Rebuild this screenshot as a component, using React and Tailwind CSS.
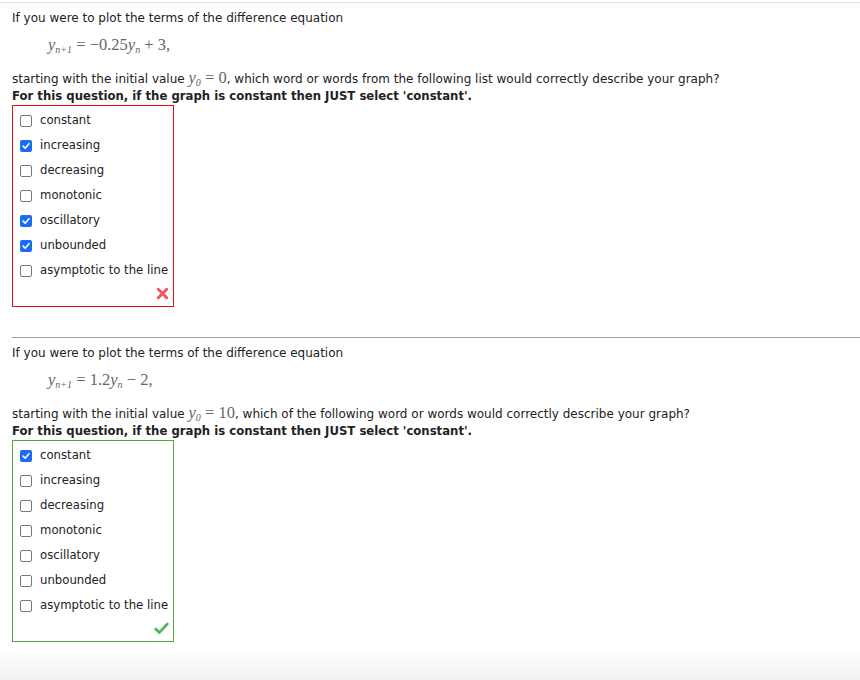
import React from "react";

const options = [
  "constant",
  "increasing",
  "decreasing",
  "monotonic",
  "oscillatory",
  "unbounded",
  "asymptotic to the line",
];

const Box = ({ checked }) =>
  checked ? (
    <span className="flex h-[12px] w-[12px] shrink-0 items-center justify-center rounded-[2px] bg-[#1a6cf5]">
      <svg viewBox="0 0 12 12" className="h-[10px] w-[10px]">
        <path d="M2.5 6.2 L5 8.6 L9.6 3.2" fill="none" stroke="white" strokeWidth="1.9" strokeLinecap="round" strokeLinejoin="round" />
      </svg>
    </span>
  ) : (
    <span className="h-[12px] w-[12px] shrink-0 rounded-[2px] border border-[#767676] bg-white" />
  );

const Cross = () => (
  <svg viewBox="0 0 14 14" className="h-[13px] w-[13px]">
    <path d="M2.5 2.5 L11.5 11.5 M11.5 2.5 L2.5 11.5" stroke="#f25462" strokeWidth="3.2" strokeLinecap="round" />
  </svg>
);

const Tick = () => (
  <svg viewBox="0 0 16 14" className="h-[13px] w-[15px]">
    <path d="M1.8 7.5 L5.6 11.4 L14.2 2.2" fill="none" stroke="#4cb957" strokeWidth="3" strokeLinecap="round" strokeLinejoin="round" />
  </svg>
);

const Math = ({ children }) => (
  <span className="text-[16.5px] text-[#666]" style={{ fontFamily: '"Liberation Serif", serif' }}>
    {children}
  </span>
);

const Y = ({ sub }) => (
  <>
    <i>y</i>
    <sub className="text-[10px] italic">{sub}</sub>
  </>
);

const Question = ({ eq, init, prompt, checked, correct }) => (
  <div className="px-3">
    <p className="pt-[7px] leading-[16px]">If you were to plot the terms of the difference equation</p>
    <div className="mt-[9px] h-[20px] pl-[36px] leading-[20px]">
      <Math>{eq}</Math>
    </div>
    <p className="mt-[14px] h-[18px] leading-[18px]">
      starting with the initial value{" "}
      <Math>
        <Y sub="0" /> = {init}
      </Math>
      , {prompt}
    </p>
    <p className="h-[18px] text-[11.7px] font-bold leading-[18px]">
      For this question, if the graph is constant then JUST select 'constant'.
    </p>
    <div
      className={`w-[162px] border pb-[2px] pt-[2px] ${correct ? "border-[#4ea93a]" : "border-[#e01010]"}`}
    >
      {options.map((o, i) => (
        <label key={o} className="flex h-[25px] items-center gap-[8px] whitespace-nowrap pl-[7px] text-[11.7px]">
          <Box checked={checked.includes(i)} />
          <span>{o}</span>
        </label>
      ))}
      <div className="flex h-[21px] items-center justify-end pr-[4px]">{correct ? <Tick /> : <Cross />}</div>
    </div>
  </div>
);

export default function App() {
  return (
    <div
      className="relative h-[680px] w-[860px] overflow-hidden bg-white text-[12px] text-[#222]"
      style={{ fontFamily: '"DejaVu Sans", Verdana, sans-serif' }}
    >
      <div className="mt-[2px] h-px bg-[#e4e4e4]" />
      <Question
        eq={
          <>
            <Y sub="n+1" /> = −0.25<Y sub="n" /> + 3,
          </>
        }
        init="0"
        prompt="which word or words from the following list would correctly describe your graph?"
        checked={[1, 4, 5]}
        correct={false}
      />
      <div className="ml-3 mt-[30px] h-px bg-[#a0a0a0]" />
      <Question
        eq={
          <>
            <Y sub="n+1" /> = 1.2<Y sub="n" /> − 2,
          </>
        }
        init="10"
        prompt="which of the following word or words would correctly describe your graph?"
        checked={[0]}
        correct={true}
      />
      <div className="absolute bottom-0 left-0 right-0 h-[32px] bg-gradient-to-b from-white to-[#f1f1f1]" />
    </div>
  );
}
